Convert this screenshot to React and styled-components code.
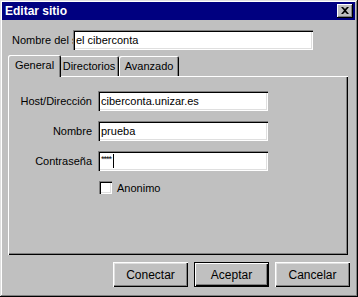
import React from "react";
import styled, { createGlobalStyle } from "styled-components";

const GlobalStyle = createGlobalStyle`
  body {
    margin: 0;
    background: #c0c0c0;
    font-family: "Liberation Sans", Arial, sans-serif;
    font-size: 11px;
    color: #000;
  }
`;

const Window = styled.div`
  width: 358px;
  height: 297px;
  box-sizing: border-box;
  padding: 2px;
  background: #c0c0c0;
  box-shadow: inset -1px -1px #000, inset 1px 1px #dfdfdf,
    inset -2px -2px #808080, inset 2px 2px #fff;
  display: flex;
  flex-direction: column;
`;

const TitleBar = styled.div`
  height: 18px;
  background: #000080;
  color: #fff;
  font-size: 12px;
  font-weight: bold;
  display: flex;
  align-items: center;
  justify-content: space-between;
  padding: 0 2px 0 3px;
  margin-right: 1px;
`;

const CloseButton = styled.div`
  width: 16px;
  height: 14px;
  box-sizing: border-box;
  background: #c0c0c0;
  box-shadow: inset -1px -1px #000, inset 1px 1px #fff, inset -2px -2px #808080;
  display: flex;
  align-items: center;
  justify-content: center;
  padding: 0 1px 1px 0;
`;

const Content = styled.div`
  padding: 10px 6px 0 6px;
  display: flex;
  flex-direction: column;
`;

const NameRow = styled.div`
  display: flex;
  align-items: center;
  height: 20px;
  margin-left: 4px;
`;

const ClipLabel = styled.div`
  width: 61px;
  overflow: hidden;
  white-space: nowrap;
`;

const Field = styled.div`
  width: ${(p) => p.$w}px;
  height: 20px;
  box-sizing: border-box;
  background: #fff;
  box-shadow: inset 1px 1px #808080, inset 2px 2px #000,
    inset -1px -1px #fff, inset -2px -2px #dfdfdf;
  display: flex;
  align-items: center;
  padding: 0 3px;
  white-space: nowrap;
  overflow: hidden;
`;

const Stars = styled.span`
  font-size: 9px;
  letter-spacing: -1px;
  position: relative;
  top: -2px;
`;

const Caret = styled.span`
  display: inline-block;
  width: 1px;
  height: 14px;
  background: #000;
  margin-left: 2px;
`;

const TabRow = styled.div`
  display: flex;
  align-items: flex-end;
  height: 22px;
  margin-top: 4px;
  padding-left: 2px;
`;

const Tab = styled.div`
  position: relative;
  box-sizing: border-box;
  height: ${(p) => (p.$active ? 22 : 20)}px;
  margin: ${(p) => (p.$active ? "0 -2px -1px -2px" : "0")};
  padding: ${(p) => (p.$active ? "3px 8px 0" : "2px 6px 0")};
  width: ${(p) => p.$w}px;
  background: #c0c0c0;
  border-radius: 2px 2px 0 0;
  box-shadow: inset 1px 1px #fff, inset -1px 0 #000, inset -2px 0 #808080;
  z-index: ${(p) => (p.$active ? 2 : 1)};
  display: flex;
  justify-content: center;
  align-items: flex-start;
  padding-top: 4px;
`;

const Panel = styled.div`
  width: 340px;
  height: 179px;
  box-sizing: border-box;
  box-shadow: inset 1px 1px #fff, inset -1px -1px #000, inset -2px -2px #808080;
  padding: 15px 0 0 2px;
`;

const Form = styled.div`
  display: grid;
  grid-template-columns: 82px 170px;
  grid-auto-rows: 20px;
  column-gap: 6px;
  row-gap: 10px;
  align-items: center;
`;

const Label = styled.div`
  text-align: right;
  white-space: nowrap;
`;

const CheckRow = styled.label`
  grid-column: 2;
  display: flex;
  align-items: center;
  gap: 5px;
  align-self: start;
  padding-left: 1px;
`;

const CheckBox = styled.span`
  width: 13px;
  height: 13px;
  box-sizing: border-box;
  background: #fff;
  box-shadow: inset 1px 1px #808080, inset 2px 2px #000,
    inset -1px -1px #fff, inset -2px -2px #dfdfdf;
`;

const ButtonRow = styled.div`
  display: flex;
  justify-content: flex-end;
  gap: 6px;
  margin-top: 7px;
  padding-right: 0;
`;

const Button = styled.div`
  width: 75px;
  height: 25px;
  box-sizing: border-box;
  display: flex;
  align-items: center;
  justify-content: center;
  font-size: 12px;
  background: #c0c0c0;
  box-shadow: ${(p) =>
    p.$default
      ? "inset 0 0 0 1px #000, inset 2px 2px #fff, inset -2px -2px #000, inset -3px -3px #808080"
      : "inset 1px 1px #fff, inset -1px -1px #000, inset -2px -2px #808080, inset 2px 2px #dfdfdf"};
`;

export default function App() {
  return (
    <>
      <GlobalStyle />
      <Window>
        <TitleBar>
          <span>Editar sitio</span>
          <CloseButton>
            <svg width="8" height="7" viewBox="0 0 8 7">
              <path d="M0 0h2l2 2 2-2h2L5 3.5 8 7H6L4 5 2 7H0l3-3.5z" fill="#000" />
            </svg>
          </CloseButton>
        </TitleBar>
        <Content>
          <NameRow>
            <ClipLabel>Nombre del sitio</ClipLabel>
            <Field $w={240}>el ciberconta</Field>
          </NameRow>
          <TabRow>
            <Tab $active $w={53}>General</Tab>
            <Tab $w={60}>Directorios</Tab>
            <Tab $w={60}>Avanzado</Tab>
          </TabRow>
          <Panel>
            <Form>
              <Label>Host/Dirección</Label>
              <Field $w={170}>ciberconta.unizar.es</Field>
              <Label>Nombre</Label>
              <Field $w={170}>prueba</Field>
              <Label>Contraseña</Label>
              <Field $w={170}>
                <Stars>****</Stars>
                <Caret />
              </Field>
              <CheckRow>
                <CheckBox />
                Anonimo
              </CheckRow>
            </Form>
          </Panel>
          <ButtonRow>
            <Button>Conectar</Button>
            <Button $default>Aceptar</Button>
            <Button>Cancelar</Button>
          </ButtonRow>
        </Content>
      </Window>
    </>
  );
}
